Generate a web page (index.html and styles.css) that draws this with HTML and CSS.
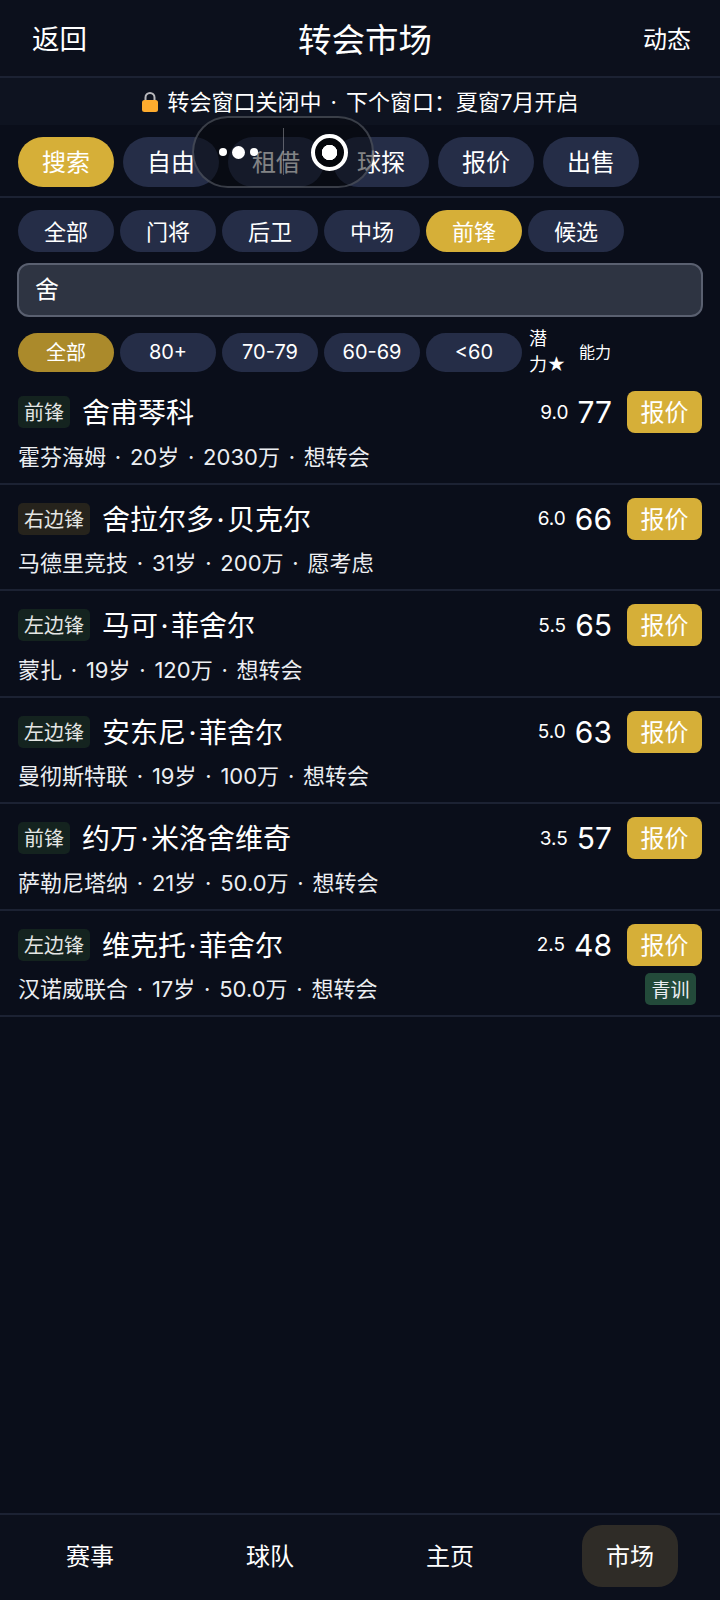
FILE: index.html
```html
<!DOCTYPE html>
<html lang="zh-CN">
<head>
  <meta charset="UTF-8" />
  <title>转会市场</title>
  <link rel="stylesheet" href="styles.css">
</head>
<body>
  <header class="topbar">
    <a class="back">返回</a>
    <h1>转会市场</h1>
    <a class="news">动态</a>
  </header>

  <div class="notice">
    <svg class="lock" width="18" height="22" viewBox="0 0 18 22">
      <path d="M4.5 10V6.5a4.5 4.5 0 0 1 9 0V10" fill="none" stroke="#b9b9bd" stroke-width="2"/>
      <rect x="1" y="9" width="16" height="12" rx="2.5" fill="#fdab2e"/>
    </svg>
    <span>转会窗口关闭中 · 下个窗口：夏窗7月开启</span>
  </div>

  <nav class="tabs">
    <a class="tab on">搜索</a>
    <a class="tab">自由</a>
    <a class="tab">租借</a>
    <a class="tab">球探</a>
    <a class="tab">报价</a>
    <a class="tab">出售</a>
  </nav>

  <div class="filters">
    <div class="chips">
      <a class="chip">全部</a>
      <a class="chip">门将</a>
      <a class="chip">后卫</a>
      <a class="chip">中场</a>
      <a class="chip on">前锋</a>
      <a class="chip">候选</a>
    </div>
    <div class="search">舍</div>
    <div class="chips rating">
      <a class="chip on">全部</a>
      <a class="chip">80+</a>
      <a class="chip">70-79</a>
      <a class="chip">60-69</a>
      <a class="chip">&lt;60</a>
      <a class="sort">潜<br>力★</a>
      <a class="sort small">能力</a>
    </div>
  </div>

  <div class="players">
    <div class="player">
      <div class="line">
        <span class="pos green">前锋</span>
        <span class="name">舍甫琴科</span>
        <span class="pot">9.0</span>
        <span class="ovr">77</span>
        <a class="offer">报价</a>
      </div>
      <div class="line info">
        <span>霍芬海姆 · 20岁 · 2030万 · 想转会</span>
      </div>
    </div>
    <div class="player">
      <div class="line">
        <span class="pos brown">右边锋</span>
        <span class="name">舍拉尔多<i class="sep">·</i>贝克尔</span>
        <span class="pot">6.0</span>
        <span class="ovr">66</span>
        <a class="offer">报价</a>
      </div>
      <div class="line info">
        <span>马德里竞技 · 31岁 · 200万 · 愿考虑</span>
      </div>
    </div>
    <div class="player">
      <div class="line">
        <span class="pos green">左边锋</span>
        <span class="name">马可<i class="sep">·</i>菲舍尔</span>
        <span class="pot">5.5</span>
        <span class="ovr">65</span>
        <a class="offer">报价</a>
      </div>
      <div class="line info">
        <span>蒙扎 · 19岁 · 120万 · 想转会</span>
      </div>
    </div>
    <div class="player">
      <div class="line">
        <span class="pos green">左边锋</span>
        <span class="name">安东尼<i class="sep">·</i>菲舍尔</span>
        <span class="pot">5.0</span>
        <span class="ovr">63</span>
        <a class="offer">报价</a>
      </div>
      <div class="line info">
        <span>曼彻斯特联 · 19岁 · 100万 · 想转会</span>
      </div>
    </div>
    <div class="player">
      <div class="line">
        <span class="pos green">前锋</span>
        <span class="name">约万<i class="sep">·</i>米洛舍维奇</span>
        <span class="pot">3.5</span>
        <span class="ovr">57</span>
        <a class="offer">报价</a>
      </div>
      <div class="line info">
        <span>萨勒尼塔纳 · 21岁 · 50.0万 · 想转会</span>
      </div>
    </div>
    <div class="player">
      <div class="line">
        <span class="pos green">左边锋</span>
        <span class="name">维克托<i class="sep">·</i>菲舍尔</span>
        <span class="pot">2.5</span>
        <span class="ovr">48</span>
        <a class="offer">报价</a>
      </div>
      <div class="line info">
        <span>汉诺威联合 · 17岁 · 50.0万 · 想转会</span>
        <span class="youth">青训</span>
      </div>
    </div>
  </div>

  <footer class="bottom">
    <a class="bottom-tab">赛事</a>
    <a class="bottom-tab">球队</a>
    <a class="bottom-tab">主页</a>
    <a class="bottom-tab on">市场</a>
  </footer>

  <div class="float-ball">
    <span class="bar"></span>
    <span class="dots"><i></i><i class="big"></i><i></i></span>
    <span class="ring"></span>
  </div>
</body>
</html>
```

FILE: styles.css
```css
html, body {
  margin: 0;
  padding: 0;
}
* {
  box-sizing: border-box;
}
body {
  width: 720px;
  height: 1600px;
  position: relative;
  overflow: hidden;
  display: flex;
  flex-direction: column;
  background: #0a0e1a;
  color: #fff;
  font-family: Inter, "Noto Sans CJK SC", sans-serif;
}
.topbar {
  height: 78px;
  padding: 0 29px 2px 32px;
  display: flex;
  align-items: center;
  justify-content: space-between;
  background: #0c101c;
  border-bottom: 2px solid #1c2233;
}
.topbar h1 {
  margin: 0;
  font-size: 33.5px;
  font-weight: 400;
}
.back {
  font-size: 27.5px;
}
.news {
  font-size: 24px;
}
.notice {
  height: 47px;
  padding-bottom: 3px;
  display: flex;
  align-items: center;
  justify-content: center;
  gap: 8px;
  background: #0e1320;
  font-size: 22px;
  word-spacing: 3px;
}
.lock {
  margin-top: 4px;
}
.tabs {
  display: flex;
  gap: 9px;
  padding: 12px 18px 9px;
  height: 73px;
  border-bottom: 2px solid #1c2233;
}
.tab {
  width: 96px;
  height: 50px;
  padding-bottom: 4px;
  border-radius: 25px;
  display: flex;
  align-items: center;
  justify-content: center;
  background: #252d47;
  font-size: 24px;
}
.tab.on {
  background: #d6af38;
}
.filters {
  padding: 12px 18px 0;
}
.chips {
  display: flex;
  gap: 6px;
}
.chip {
  width: 96px;
  height: 42px;
  padding-bottom: 3px;
  border-radius: 21px;
  display: flex;
  align-items: center;
  justify-content: center;
  background: #252d47;
  font-size: 22px;
}
.chip.on {
  background: #d6af38;
}
.search {
  height: 54px;
  margin: 11px -1px 9px;
  padding: 0 16px 5px;
  display: flex;
  align-items: center;
  background: #2e3442;
  border: 2px solid #5a6070;
  border-radius: 12px;
  font-size: 24px;
}
.rating {
  align-items: center;
}
.rating .chip {
  height: 39px;
  padding-bottom: 0;
  font-size: 20px;
}
.rating .chip.on {
  padding-bottom: 2px;
  background: #ab8a2b;
}
.sort {
  width: 40px;
  margin-left: 1px;
  font-size: 18px;
  line-height: 26px;
}
.sort.small {
  width: auto;
  margin-left: 4px;
  font-size: 16px;
}
.player {
  height: 106.5px;
  padding: 0 18px;
  display: flex;
  flex-direction: column;
  border-bottom: 2px solid #1c2233;
}
.line {
  display: flex;
  align-items: center;
}
.line:first-child {
  height: 48px;
  margin-top: 10px;
}
.info {
  height: 37px;
  justify-content: space-between;
  font-size: 22px;
  word-spacing: 2.6px;
  color: #eceef2;
}
.pos {
  height: 32px;
  padding: 0 6px 1px;
  display: flex;
  align-items: center;
  border-radius: 5px;
  font-size: 20px;
  color: #e4e6e4;
}
.pos.green {
  background: #14231f;
}
.pos.brown {
  background: #26231c;
}
.name {
  flex: 1;
  margin-left: 12px;
  padding-bottom: 2px;
  font-size: 28px;
}
.sep {
  margin: 0 2.5px;
  font-style: normal;
}
.pot {
  font-size: 19px;
}
.ovr {
  margin: 0 15px 0 9px;
  font-size: 30px;
}
.offer {
  width: 75px;
  height: 42px;
  padding-bottom: 3px;
  border-radius: 8px;
  display: flex;
  align-items: center;
  justify-content: center;
  background: #d6af38;
  font-size: 24px;
}
.youth {
  width: 51px;
  height: 32px;
  margin: 4px 6px 0 0;
  padding-bottom: 1px;
  border-radius: 5px;
  display: flex;
  align-items: center;
  justify-content: center;
  background: #234a3a;
  font-size: 19px;
}
.bottom {
  margin-top: auto;
  height: 87px;
  padding-bottom: 4px;
  display: flex;
  align-items: center;
  background: #0c101c;
  border-top: 2px solid #1c2233;
}
.bottom-tab {
  width: 180px;
  height: 62px;
  padding-bottom: 2px;
  display: flex;
  align-items: center;
  justify-content: center;
  font-size: 24px;
}
.bottom-tab.on {
  width: 96px;
  margin-left: 42px;
  border-radius: 20px;
  background: #2f2c27;
}
.float-ball {
  position: absolute;
  left: 192px;
  top: 116px;
  width: 182px;
  height: 72px;
  border: 2px solid rgba(120, 125, 135, 0.45);
  border-radius: 36px;
  background: rgba(5, 7, 12, 0.5);
  display: flex;
  align-items: center;
  justify-content: space-between;
  padding: 0 24px 0 25px;
}
.bar {
  position: absolute;
  left: 89px;
  top: 10px;
  width: 1px;
  height: 47px;
  background: rgba(200, 200, 205, 0.4);
}
.dots {
  display: flex;
  align-items: center;
  gap: 5px;
}
.dots i {
  width: 8px;
  height: 8px;
  border-radius: 50%;
  background: #fff;
}
.dots i.big {
  width: 13px;
  height: 13px;
}
.ring {
  width: 37px;
  height: 37px;
  border: 4px solid #fff;
  border-radius: 50%;
  background: radial-gradient(circle, #fff 0 7.5px, #05070c 8px);
}
```
